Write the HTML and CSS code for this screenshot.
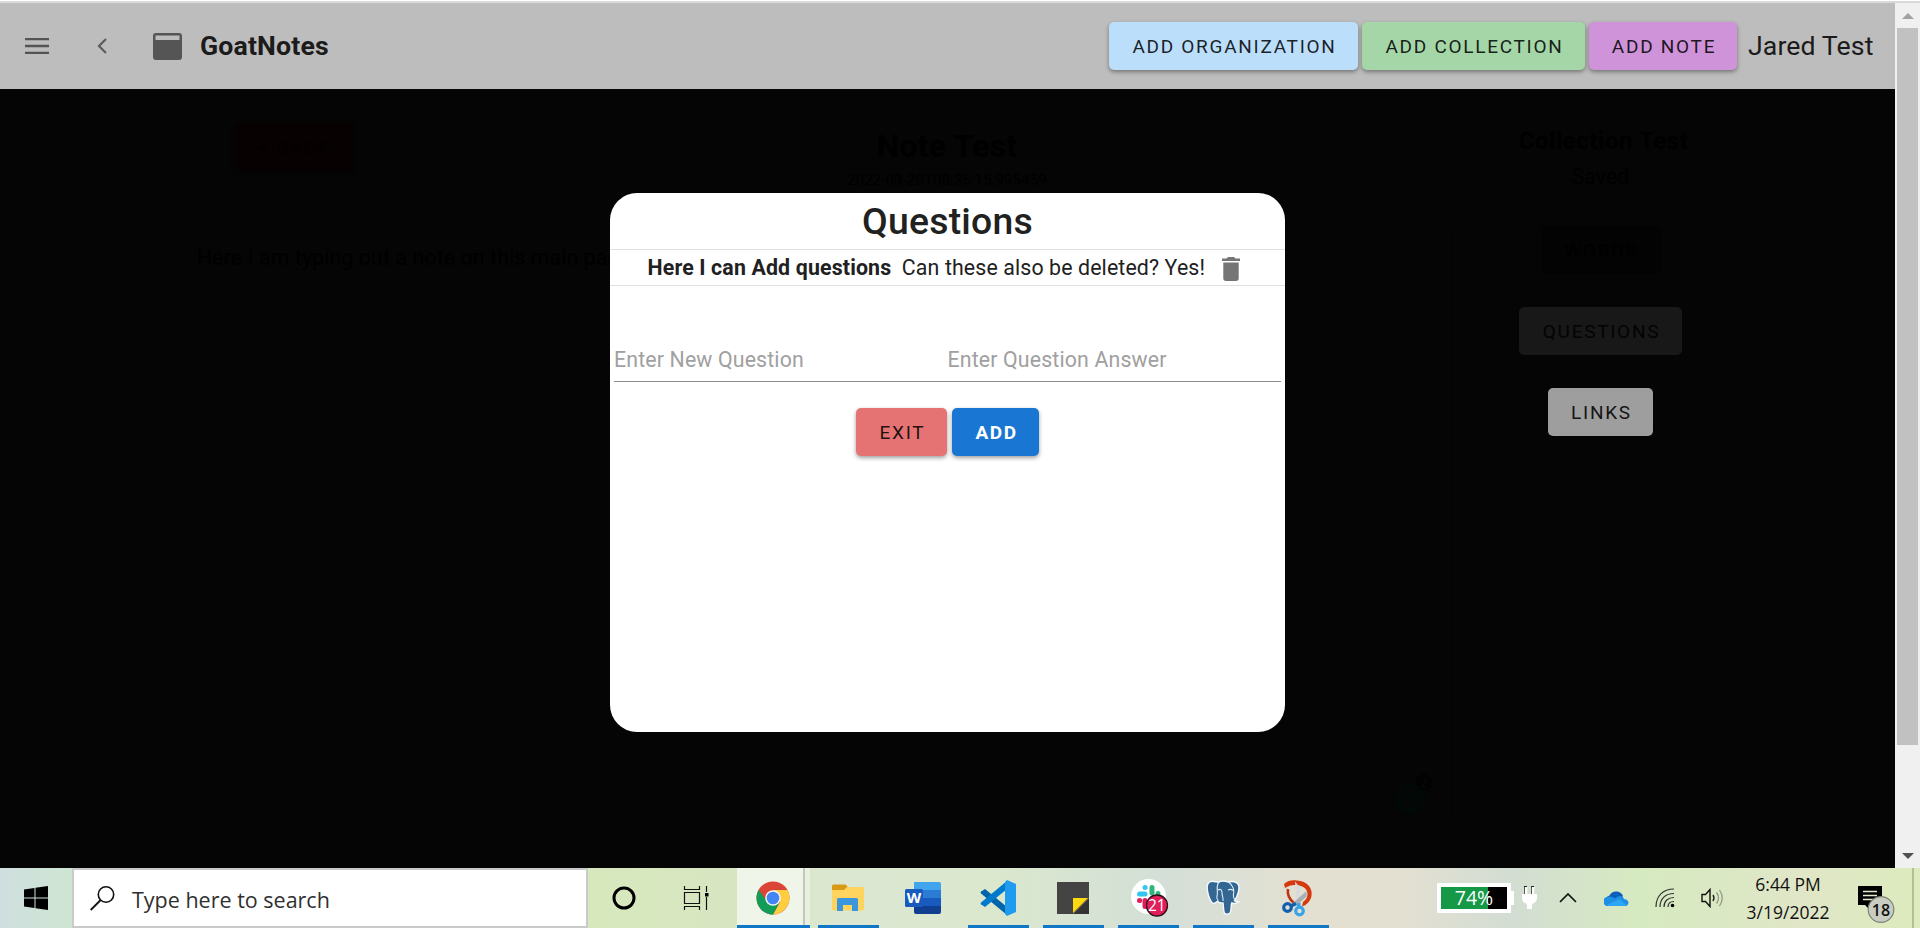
FILE: index.html
```html
<!DOCTYPE html>
<html lang="en">
<head>
<meta charset="utf-8">
<title>GoatNotes</title>
<link rel="stylesheet" href="styles.css">
</head>
<body>
<div class="screen">
  <div class="topline"></div>
  <div class="browser">
    <div class="page">
      <header class="appbar">
        <svg class="ic-menu" width="24" height="16" viewBox="0 0 24 16"><path d="M0 1h24M0 8h24M0 15h24" stroke="#545454" stroke-width="2.3"/></svg>
        <svg class="ic-back" width="10" height="16" viewBox="0 0 10 16"><path d="M9 1L2 8l7 7" fill="none" stroke="#5c5c5c" stroke-width="2.2"/></svg>
        <svg class="ic-app" width="29" height="27" viewBox="0 0 29 27"><path fill-rule="evenodd" d="M3 0h23a3 3 0 0 1 3 3v21a3 3 0 0 1-3 3H3a3 3 0 0 1-3-3V3a3 3 0 0 1 3-3zM2.5 2.5V7h24V2.5z" fill="#555"/></svg>
        <h1 class="brand">GoatNotes</h1>
        <button class="btn org">ADD ORGANIZATION</button>
        <button class="btn coll">ADD COLLECTION</button>
        <button class="btn note">ADD NOTE</button>
        <span class="user">Jared Test</span>
      </header>
      <main class="content">
        <section class="editor">
          <div class="editor-head">
            <button class="btn back">&lt; BACK</button>
            <div class="heading"><h2>Note Test</h2><p>2022-03-20T00:35:15.995459</p></div>
          </div>
          <div class="paper">Here I am typing out a note on this main page
            <svg class="helper" width="42" height="42" viewBox="0 0 42 42"><circle cx="18" cy="24" r="16" fill="#020806"/><path d="M25 18a9 9 0 1 0 2 7h-7" fill="none" stroke="#060606" stroke-width="2.5"/><circle cx="31" cy="8" r="8" fill="#020202"/><text x="31" y="12.500" text-anchor="middle" class="helper-count">2</text></svg>
          </div>
        </section>
        <aside class="side">
          <h3>Collection Test</h3>
          <p>Saved</p>
          <button class="btn words">WORDS</button>
          <button class="btn questions">QUESTIONS</button>
          <button class="btn links">LINKS</button>
        </aside>
        <div class="dialog">
          <h2 class="dialog-title">Questions</h2>
          <div class="qa">
            <b>Here I can Add questions</b><span>Can these also be deleted? Yes!</span>
            <svg width="18" height="24" viewBox="0 0 18 24"><path d="M0 1.4h4.5L6 0h6l1.500 1.400H18V4H0zM1.300 5.400h15.400V21.300a2.700 2.700 0 0 1-2.700 2.700H4a2.700 2.700 0 0 1-2.700-2.700z" fill="#757575"/></svg>
          </div>
          <div class="fields"><span>Enter New Question</span><span>Enter Question Answer</span></div>
          <div class="actions"><button class="btn exit">EXIT</button><button class="btn add">ADD</button></div>
        </div>
      </main>
    </div>
    <div class="scroll">
      <svg width="25" height="25" viewBox="0 0 25 25"><path d="M7 16h12l-6-6z" fill="#a3a3a3"/></svg>
      <div class="thumb"></div>
      <svg class="down" width="25" height="25" viewBox="0 0 25 25"><path d="M7 10h12l-6 6z" fill="#505050"/></svg>
    </div>
  </div>
  <footer class="taskbar">
    <div class="start"><svg width="24" height="24" viewBox="0 0 24 24"><path d="M0 3.400L10.500 2v9.500H0zM11.500 1.800L24 0v11.500H11.500zM0 12.500h10.500V22L0 20.600zM11.500 12.500H24V24l-12.500-1.800z"/></svg></div>
    <div class="search"><svg width="25" height="25" viewBox="0 0 25 25"><circle cx="16" cy="8.500" r="7.700" fill="none" stroke="#111" stroke-width="1.600"/><path d="M10.700 14L.7 24" stroke="#111" stroke-width="1.800"/></svg><span>Type here to search</span></div>
    <div class="cell cortana"><svg width="26" height="26" viewBox="0 0 26 26"><circle cx="13" cy="13" r="10" fill="none" stroke="#000" stroke-width="3"/></svg></div>
    <div class="cell tview"><svg width="26" height="24" viewBox="0 0 26 24"><path d="M1.500 0v3.500h15V0M1.500 24v-3.500h15V24M1.500 6.500h15v11h-15zM23.500 0v6M23.500 11v13" fill="none" stroke="#111" stroke-width="1.200"/><path d="M22 7h3.500v3.500H22z"/></svg></div>
    <div class="cell chrome"><svg width="34" height="34" viewBox="0 0 34 34"><circle cx="17" cy="17" r="16.500" fill="#db4437"/><path d="M17 9h14.400A16.500 16.500 0 0 1 17 33.500L24 21z" fill="#ffcd40"/><path d="M2.700 8.800A16.500 16.500 0 0 0 17 33.500l6.500-12-6.500 2-6-3z" fill="#0f9d58"/><circle cx="17" cy="17" r="7.800" fill="#f4f4f4"/><circle cx="17" cy="17" r="6.300" fill="#4285f4"/></svg></div>
    <div class="cell open"><svg width="34" height="28" viewBox="0 0 34 28"><path d="M1 2a1.500 1.500 0 0 1 1.500-1.500h12L17 3l-3 5H1z" fill="#d89a15"/><path d="M1 6h12l3-3h15.500A1.500 1.500 0 0 1 33 4.500V25a1.500 1.500 0 0 1-1.500 1.500h-29A1.500 1.500 0 0 1 1 25z" fill="#ffd45e"/><path d="M6 27V15.500A1.500 1.500 0 0 1 7.500 14h18a1.500 1.500 0 0 1 1.500 1.500V27h-6v-6h-9v6z" fill="#3a96dd"/></svg></div>
    <div class="cell"><svg width="36" height="32" viewBox="0 0 36 32"><path d="M9 0h25a2 2 0 0 1 2 2v6H9z" fill="#41a5ee"/><path d="M9 8h27v8H9z" fill="#2b7cd3"/><path d="M9 16h27v8H9z" fill="#185abd"/><path d="M9 24h27v6a2 2 0 0 1-2 2H11a2 2 0 0 1-2-2z" fill="#103f91"/><rect y="7" width="18" height="18" rx="1.500" fill="#185abd"/><text x="9" y="21" text-anchor="middle" class="wordmark">W</text></svg></div>
    <div class="cell open"><svg width="36" height="36" viewBox="0 0 36 36"><path d="M2 11L5 9l22 18v8L1 13.500a1.500 1.500 0 0 1 1-2.500z" fill="#0065a9"/><path d="M2 25L5 27 27 9V1L1 22.500A1.500 1.500 0 0 0 2 25z" fill="#007acc"/><path d="M27 0l9 4v28l-9 4-2-2V2z" fill="#1f9cf0"/></svg></div>
    <div class="cell open"><svg width="32" height="32" viewBox="0 0 32 32"><path d="M0 0h32v16L16 32H0z" fill="#444"/><path d="M16 32h16V16z" fill="#343434"/><path d="M16 16h15L16 31z" fill="#ffd90f"/></svg></div>
    <div class="cell open slack"><svg width="38" height="38" viewBox="0 0 38 38"><circle cx="17.500" cy="17.500" r="17.500" fill="#fff"/><g stroke-width="5" stroke-linecap="round"><path d="M8.500 15h5.500M14 8.500h.1" stroke="#36c5f0"/><path d="M21 8.500V14M27 14.500v.1" stroke="#2eb67d"/><path d="M14 21.500v6M8.500 21.500h.1" stroke="#e01e5a"/><path d="M21 21.500h6" stroke="#ecb22e"/></g><circle cx="26" cy="26.500" r="10.500" fill="#e01e5a" stroke="#2c1018" stroke-width="1.300"/><text x="25.800" y="32" text-anchor="middle" class="count">21</text></svg></div>
    <div class="cell open"><svg width="34" height="36" viewBox="0 0 34 36"><path d="M8 1.500C2 0 .5 5 1.500 11c1 6 3.500 12 6 12.500 2 .3 3.500-3 4.500-2 .8 1.500 3 1.500 5 1.500.5 2.500.3 7 1.200 9.500.8 2.500 5.300 2.500 6.300-.5.800-2.500.5-7 1.200-9 2 .8 5.200.3 6.800-1.300-1.500.1-3.500.2-4-1 3-4 5.500-12 4-15.700C31 1.500 26 .8 22.500 2 19 1 14.500.5 12.500 2.500 11 1.700 9.500 1.600 8 1.500z" fill="#336791" stroke="#f4faff" stroke-width="1.400"/><path d="M12.500 2.500c-3 5 0 10-1.500 13.500-.8 2.500 1 3.500 1 5.500M22.500 2c5 3.500 6 9 5 12-.7 2.500.5 4 1 5.500M12 10c3-1.500 4 0 4 3s1.500 4 1 8M22 10c2-1 4-.5 5 .5" fill="none" stroke="#dfeef8" stroke-width="1.100"/></svg></div>
    <div class="cell open"><svg width="31" height="38" viewBox="0 0 31 38"><path d="M2 5c4-4 9-4 13-3.500C25 2 31 9 29.500 17c-1 5-4.500 9-9.500 10.500l1-4.500c3-2 4.500-5 4.500-8C25.500 10 21 6.500 14 6c-4-.3-7 .5-11 3z" fill="#d5390f"/><path d="M6 10c-1 6 1 10 6 14" fill="none" stroke="#c0330f" stroke-width="2.600"/><path d="M13 2.500l5 6 1.500 18-4.500-1z" fill="#d8dadc"/><path d="M24.500 12v5.500L14 27l-3-3z" fill="#a9aeb2"/><circle cx="5.500" cy="28.500" r="3.800" fill="none" stroke="#125fae" stroke-width="3.200"/><path d="M9 27l5-2.500" stroke="#125fae" stroke-width="3.500"/><circle cx="17.500" cy="32" r="3.800" fill="none" stroke="#38a3e6" stroke-width="3.200"/><path d="M17 28l-.5-4" stroke="#38a3e6" stroke-width="3.500"/></svg></div>
    <div class="tray">
      <div class="battery"><span>74%</span></div>
      <svg class="plug" width="15" height="24" viewBox="0 0 15 24"><path d="M3.500 0v8M10.500 0v8" stroke="#222" stroke-width="3"/><path d="M4 1v8M11 1v8" stroke="#fff" stroke-width="2.500"/><path d="M0 8h15v4c0 3-2 5-5 6v5H5v-5c-3-1-5-3-5-6z" fill="#fff"/></svg>
      <svg class="caret" width="18" height="10" viewBox="0 0 18 10"><path d="M1 9l8-8 8 8" fill="none" stroke="#111" stroke-width="1.700"/></svg>
      <svg class="cloud" width="25" height="17" viewBox="0 0 25 17"><path d="M5 15a5 5 0 0 1 .5-9.500A7.500 7.500 0 0 1 19 6l-6 8z" fill="#0a5fb8"/><path d="M4.500 16A4.500 4.500 0 0 1 3 7c3-1.500 6 0 8 1.500 3-3.500 8-3.500 9 .5 6 .5 5.500 7 1 7z" fill="#1f8fe6"/><path d="M3 15L15 9l8 6.200c-.6.500-1.200.8-2 .8H4.500z" fill="#2ba6f2"/></svg>
      <svg class="wifi" width="20" height="20" viewBox="0 0 20 20"><g fill="none" stroke="#333" stroke-width="1.200"><path d="M1 19C1 8 8 1 19 1M5 19C5 10.500 10.500 5.500 19 5.500M9 19c0-6 4-9.500 10-9.500M13 19c0-3.500 2-5.500 6-5.500"/></g><circle cx="17.500" cy="17.500" r="1.800"/></svg>
      <svg class="speaker" width="23" height="20" viewBox="0 0 23 20"><path d="M1 6.500h3.500L9 1.500v17l-4.500-5H1z" fill="none" stroke="#111" stroke-width="1.400"/><path d="M12 7q2 3 0 6" fill="none" stroke="#222" stroke-width="1.400"/><path d="M15.500 4.500q4 5.500 0 11M18.500 2q5.500 8 0 16" fill="none" stroke="#8d9b80" stroke-width="1.300"/></svg>
      <div class="clock"><div>6:44 PM</div><div>3/19/2022</div></div>
      <svg class="notice" width="38" height="37" viewBox="0 0 38 37"><path d="M0 0h24v19H13v6l-6-6H0z"/><path d="M5 5.500h14M5 9.500h14M5 13.500h10" stroke="#e2ebcb" stroke-width="1.300"/><circle cx="23" cy="23.500" r="12.800" fill="#c9ccc2" stroke="#7e8375" stroke-width="1.200"/><text x="23" y="29.500" text-anchor="middle" class="badge">18</text></svg>
    </div>
  </footer>
</div>
</body>
</html>
```
FILE: styles.css
```css
* { box-sizing: border-box; }
body { margin: 0; font-family: Roboto, "Liberation Sans", sans-serif; overflow: hidden; }
h1, h2, h3, p { margin: 0; }
svg { flex: none; display: block; }
.screen { width: 1920px; height: 928px; display: flex; flex-direction: column; background: #fff; }
.topline { height: 3px; border-top: 1px solid #fff; background: #d9dbda; flex: none; }
.browser { height: 865px; display: flex; flex: none; }
.page { width: 1895px; display: flex; flex-direction: column; background: #050505; }

.btn { font: 450 19px/49px Roboto, sans-serif; letter-spacing: 1.72px; text-indent: 2px; height: 48px; padding: 0; border: 0; border-radius: 5px; flex: none; color: rgba(0, 0, 0, .87); white-space: nowrap; text-align: center; box-shadow: 0 2px 4px rgba(0, 0, 0, .38); }
.appbar { height: 86px; flex: none; background: #bdbdbd; display: flex; align-items: center; color: #1b1b1b; }
.ic-menu { margin-left: 25px; }
.ic-back { margin-left: 48px; }
.ic-app { margin-left: 46px; }
.brand { margin-left: 18px; font-size: 26.67px; font-weight: 700; letter-spacing: .15px; flex: 1; }
.appbar .btn { margin-right: 4px; }
.org { width: 249px; background: #bbdefb; }
.coll { width: 223px; background: #a5d6a7; }
.note { width: 148px; background: #ce93d8; }
.user { font-size: 26.67px; letter-spacing: .1px; width: 154px; padding-left: 7px; white-space: nowrap; }

.content { position: relative; height: 779px; display: flex; }
.editor { width: 1272px; margin-left: 181px; }
.editor-head { height: 138px; display: flex; }
.back { margin: 34px 0 0 54px; width: 118px; height: 48px; background: #080101; color: #030000; }
.heading { width: 400px; margin: 37px 0 0 394px; text-align: center; color: #000; }
.heading h2 { font-size: 32px; line-height: 40px; font-weight: 700; letter-spacing: .2px; }
.heading p { font-size: 15.2px; line-height: 28px; }
.paper { position: relative; height: 594px; border: 1px solid #030303; padding: 16px 15px; font-size: 21.33px; letter-spacing: .1px; line-height: 28px; color: #000; }
.helper { position: absolute; left: 1211px; top: 546px; }
.helper-count { font: 12px Roboto, sans-serif; fill: #080808; }
.side { width: 295px; display: flex; flex-direction: column; align-items: center; padding-top: 36px; color: #000; }
.side h3 { font-size: 24px; line-height: 32px; font-weight: 700; letter-spacing: .55px; padding-left: 6px; }
.side p { font-size: 21.33px; line-height: 28px; margin: 6px 0 35px; }
.side .btn { margin-bottom: 33px; box-shadow: none; }
.words { width: 120px; background: #030303; color: #000; }
.questions { width: 163px; background: #181818; color: #030303; }
.links { width: 105px; background: #9e9e9e; color: #151515; }

.dialog { position: absolute; left: 610px; top: 104px; width: 675px; height: 539px; border-radius: 27px; background: #fff; color: #212121; }
.dialog-title { height: 57px; border-bottom: 1px solid #e0e0e0; text-align: center; font-size: 37.33px; line-height: 57px; font-weight: 500; letter-spacing: .25px; }
.qa { height: 36px; display: flex; align-items: center; border-bottom: 1px solid #e0e0e0; padding-left: 37.500px; font-size: 21.33px; letter-spacing: .12px; white-space: nowrap; }
.qa b { font-weight: 700; letter-spacing: .15px; margin-right: 10.500px; }
.qa svg { margin: 3px 0 0 17px; }
.fields { margin: 52px 4px 0; height: 44px; border-bottom: 1px solid #8d8d8d; display: grid; grid-template-columns: 333.500px 1fr; font-size: 21.33px; letter-spacing: .14px; line-height: 43px; color: #a0a0a0; }
.actions { display: flex; justify-content: center; gap: 5px; margin-top: 26px; }
.exit { width: 91px; background: #e57373; }
.add { width: 87px; background: #1976d2; color: #fff; font-weight: 700; letter-spacing: 1.5px; }

.scroll { width: 25px; background: #f0f0f0; display: flex; flex-direction: column; }
.thumb { width: 21px; height: 717px; margin-left: 2px; background: #c1c1c1; }
.down { margin-top: auto; }

.taskbar { height: 60px; flex: none; display: flex; font-family: "Open Sans", "Noto Sans", sans-serif; background: linear-gradient(90deg, #cfdfe0 0, #cfe5d3 70px, #d8e8bd 590px, #d7e6c1 735px, #dce7d2 850px, #dbe8cd 990px, #d4dfd7 1160px, #e3e0d2 1300px, #e3e0d2 1400px, #d3ddd3 1510px, #d6eac0 1640px, #e0e6c7 1800px, #dcebbd 1920px); }
.start { width: 72px; padding: 18px 0 0 24px; }
.search { width: 516px; background: #fff; border: 2px solid #c9caca; display: flex; padding-left: 16px; font-size: 21.5px; color: #303030; }
.search svg { margin-top: 16px; }
.search span { margin-left: 17px; line-height: 59px; white-space: nowrap; }
.cell { width: 61px; margin-right: 14px; display: flex; align-items: center; justify-content: center; flex: none; border-bottom: 3px solid transparent; padding: 3px 2px 0 0; }
.cell.open { border-bottom-color: #1076c6; }
.cell.cortana { width: 73px; margin: 0; }
.cell.tview { width: 70px; margin-right: 6px; padding-right: 0; }
.cell.chrome { width: 73px; margin-right: 8px; padding-right: 2px; border-bottom-color: #1076c6; background: linear-gradient(90deg, #eff5e8 66px, #c0c9b8 66px, #c0c9b8 68px, #e9f0e0 68px); }
.cell.slack { padding: 2px 0 0 2px; }
.wordmark { font: 700 15px "Open Sans", sans-serif; fill: #fff; }
.count { font: 15.5px "Open Sans", sans-serif; fill: #fff; }
.badge { font: 600 16px "Open Sans", sans-serif; fill: #111; }
.tray { flex: 1; display: flex; align-items: center; margin-left: 94px; border-right: 2px solid #b3bf9b; margin-right: 6px; }
.battery { position: relative; width: 74px; height: 30px; border: 4px solid #fff; background: linear-gradient(90deg, #159947 71%, #000 71%); color: #fff; font-size: 19.5px; line-height: 22px; text-align: center; }
.battery::after { content: ""; position: absolute; right: -7px; top: 4px; width: 3px; height: 14px; background: #fff; }
.plug { margin-left: 11px; }
.caret { margin-left: 22px; }
.cloud { margin-left: 27px; }
.wifi { margin-left: 26px; }
.speaker { margin-left: 26px; }
.clock { width: 100px; margin-left: 14px; text-align: center; font-size: 17.5px; line-height: 28px; color: #111; white-space: nowrap; }
.notice { margin: 12px 0 0 20px; }
```
